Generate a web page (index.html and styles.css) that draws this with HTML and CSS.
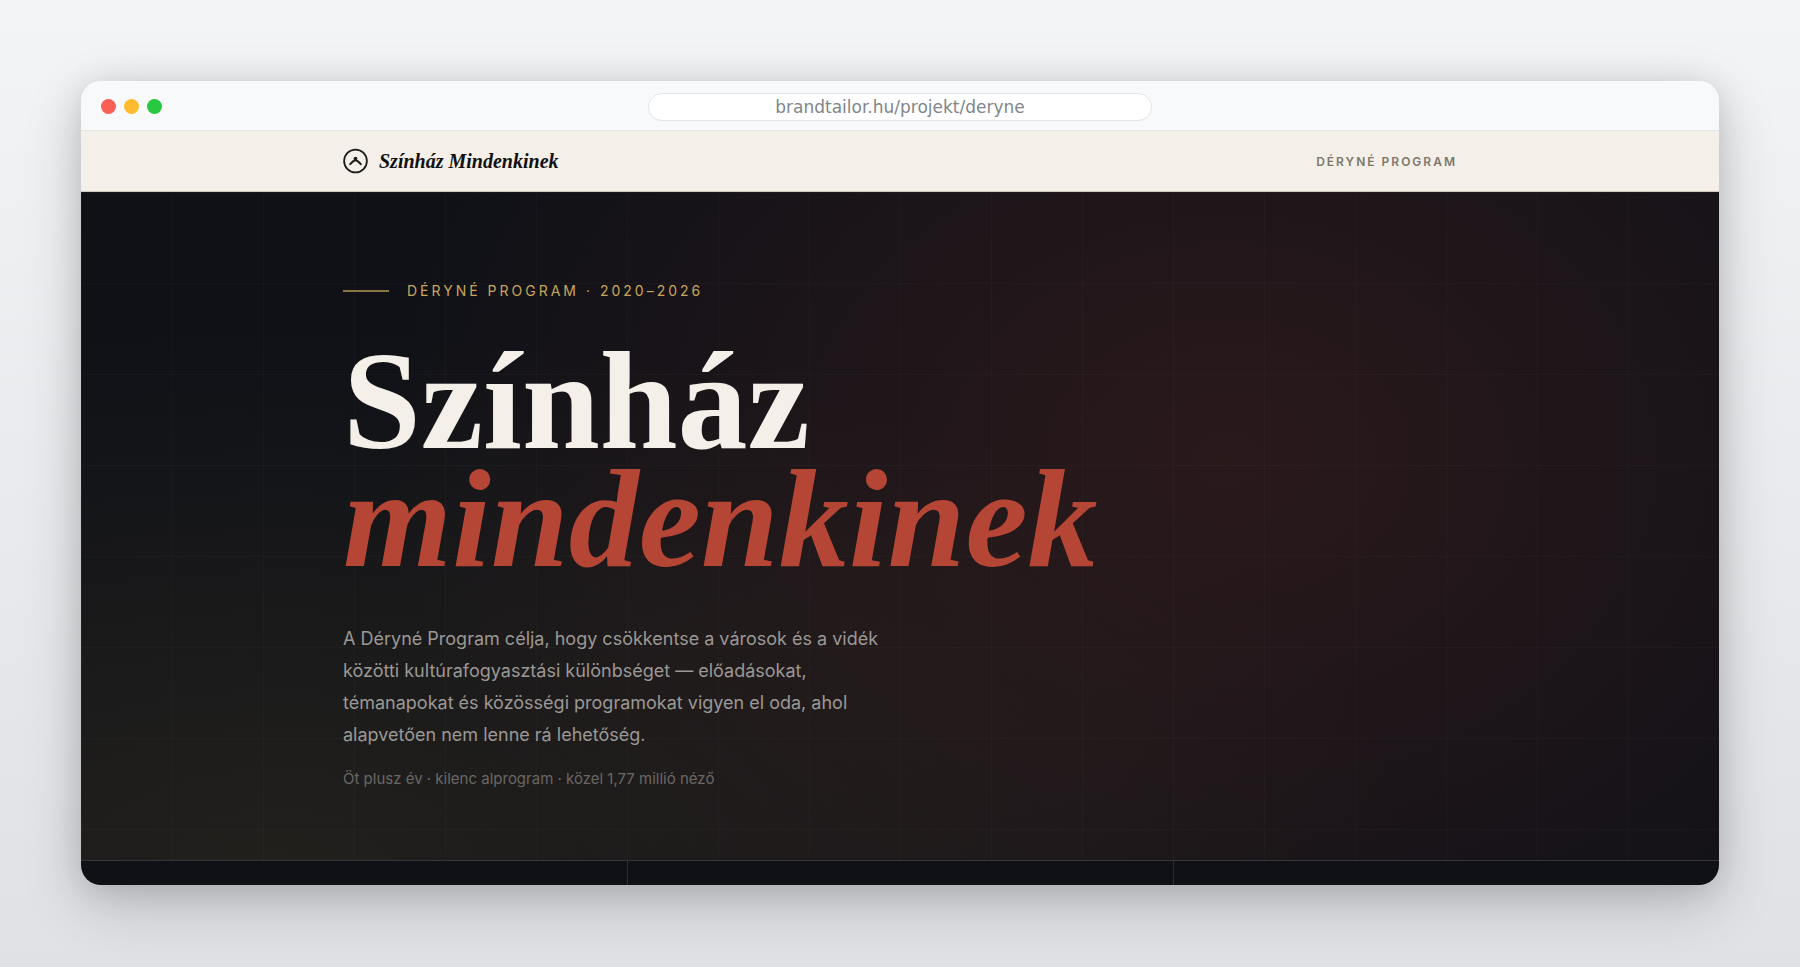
FILE: index.html
```html
<!DOCTYPE html>
<html lang="hu">
<head>
  <meta charset="UTF-8">
  <meta name="viewport" content="width=device-width, initial-scale=1.0">
  <title>Színház Mindenkinek</title>
  <link rel="stylesheet" href="styles.css">
</head>
<body>
  <div class="window">
    <div class="toolbar">
      <div class="dots">
        <span class="dot red"></span>
        <span class="dot yellow"></span>
        <span class="dot green"></span>
      </div>
      <input class="address" type="text" value="brandtailor.hu/projekt/deryne" aria-label="URL" readonly>
    </div>

    <header class="site-header">
      <div class="container header-row">
        <a class="brand" href="#">
          <svg class="brand-icon" viewBox="0 0 26 26" fill="none" stroke="#1f1d1c" aria-hidden="true">
            <circle cx="12.5" cy="13" r="11.4" stroke-width="1.8"/>
            <path d="M7.2 16.2 Q9.6 13 12.5 12 Q15.4 13 17.8 16.2" stroke-width="2" stroke-linecap="round" stroke-linejoin="round"/>
            <circle cx="12.5" cy="10.6" r="1.9" fill="#1f1d1c" stroke="none"/>
          </svg>
          <span>Színház Mindenkinek</span>
        </a>
        <span class="header-tag">Déryné Program</span>
      </div>
    </header>

    <main>
      <section class="hero">
        <div class="container">
          <p class="eyebrow">Déryné Program · 2020–2026</p>
          <h1>Színház <em>mindenkinek</em></h1>
          <p class="lead">A Déryné Program célja, hogy csökkentse a városok és a vidék közötti kultúrafogyasztási különbséget — előadásokat, témanapokat és közösségi programokat vigyen el oda, ahol alapvetően nem lenne rá lehetőség.</p>
          <p class="note">Öt plusz év · kilenc alprogram · közel 1,77 millió néző</p>
        </div>
      </section>
      <section class="stats">
        <div class="stat"></div>
        <div class="stat"></div>
        <div class="stat"></div>
      </section>
    </main>
  </div>
</body>
</html>
```

FILE: styles.css
```css
* {
    box-sizing: border-box;
}

body {
    margin: 0;
    min-height: 100vh;
    padding: 81px 81px 82px;
    display: flex;
    background: linear-gradient(#f3f4f6, #e0e1e5);
    font-family: Inter, "Liberation Sans", sans-serif;
}

.window {
    flex: 1;
    display: flex;
    flex-direction: column;
    border-radius: 20px;
    overflow: hidden;
    box-shadow: 0 20px 60px rgba(0, 0, 0, 0.18), 0 4px 32px rgba(0, 0, 0, 0.12);
}

/* browser bar */
.toolbar {
    display: grid;
    grid-template-columns: 1fr 504px 1fr;
    align-items: center;
    height: 50px;
    flex-shrink: 0;
    padding: 2px 20px 0;
    background: #f7f9fb;
    border-bottom: 1px solid #e6e7e8;
}

.dots {
    display: flex;
    gap: 8px;
}

.dot {
    width: 15px;
    height: 15px;
    border-radius: 50%;
}

.red { background: #f95f57; }
.yellow { background: #fdbc2e; }
.green { background: #28c840; }

.address {
    height: 28px;
    padding: 0 16px;
    border: 1px solid #e3e5e8;
    border-radius: 14px;
    background: #fff;
    color: #80868b;
    font-family: "DejaVu Sans", sans-serif;
    font-size: 17px;
    text-align: center;
}

/* site header */
.container {
    max-width: 1114px;
    margin: 0 auto;
}

.site-header {
    flex-shrink: 0;
    background: #f4efe8;
    border-bottom: 1px solid #cfcabb;
}

.header-row {
    display: flex;
    align-items: center;
    justify-content: space-between;
    height: 60px;
}

.brand {
    display: flex;
    align-items: center;
    gap: 10px;
    color: #111;
    font-family: "Liberation Serif", serif;
    font-size: 20px;
    font-weight: 700;
    font-style: italic;
    text-decoration: none;
}

.brand-icon {
    width: 26px;
    height: 26px;
}

.header-tag {
    color: #7d776b;
    font-size: 12px;
    font-weight: 600;
    letter-spacing: 2px;
    text-transform: uppercase;
}

/* hero */
main {
    flex: 1;
    display: flex;
    flex-direction: column;
    background: #0f1117;
}

.hero {
    padding: 87px 32px 69px;
    background:
        linear-gradient(90deg, rgba(255, 255, 255, 0.02) 1px, transparent 1px) 0 0 / 91px 91px,
        linear-gradient(rgba(255, 255, 255, 0.02) 1px, transparent 1px) 0 0 / 91px 91px,
        radial-gradient(ellipse 52% 98% at 70% 40%, rgba(184, 66, 50, 0.16), transparent),
        radial-gradient(ellipse 70% 80% at 12% 100%, rgba(200, 165, 80, 0.1), transparent),
        #0f1117;
}

.eyebrow {
    display: flex;
    align-items: center;
    gap: 18px;
    margin: 0 0 39px;
    color: #c9a65a;
    font-size: 14px;
    line-height: 24px;
    letter-spacing: 3px;
    text-transform: uppercase;
}

.eyebrow::before {
    content: "";
    width: 46px;
    height: 2px;
    background: #8b7544;
}

h1 {
    margin: 0 0 45px;
    color: #f4efe8;
    font-family: "Liberation Serif", serif;
    font-size: 140px;
    line-height: 118px;
    font-weight: 700;
}

h1 em {
    display: block;
    color: #b54535;
}

.lead {
    max-width: 546px;
    margin: 0 0 16px;
    color: #9b9895;
    font-size: 18px;
    line-height: 32px;
}

.note {
    margin: 0;
    color: #6a6865;
    font-size: 15px;
    line-height: 24px;
}

/* stats */
.stats {
    flex: 1;
    display: grid;
    grid-template-columns: repeat(3, 1fr);
    border-top: 1px solid #35353a;
}

.stat + .stat {
    border-left: 1px solid #2c2d32;
}
```
